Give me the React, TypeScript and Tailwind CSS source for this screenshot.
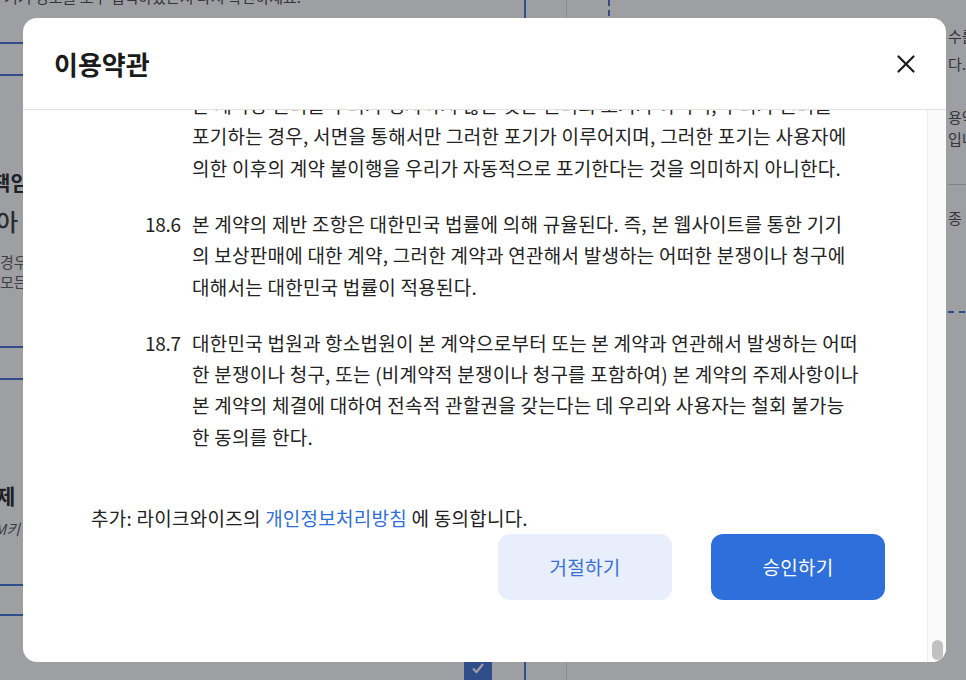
import React from 'react';

const clauses = [
  {
    no: '18.5',
    lines: [
      '우리가 본 계약의 어느 조항에 따른 권리나 구제수단을 행사하지 않거나 그 행사를',
      '지연하더라도, 이는 그러한 권리나 구제수단의 포기로 간주되지 아니한다. 우리가',
      '본 계약상 권리를 우리가 행사하지 않는 것은 권리의 포기가 아니며, 우리가 권리를',
      '포기하는 경우, 서면을 통해서만 그러한 포기가 이루어지며, 그러한 포기는 사용자에',
      '의한 이후의 계약 불이행을 우리가 자동적으로 포기한다는 것을 의미하지 아니한다.',
    ],
  },
  {
    no: '18.6',
    lines: [
      '본 계약의 제반 조항은 대한민국 법률에 의해 규율된다. 즉, 본 웹사이트를 통한 기기',
      '의 보상판매에 대한 계약, 그러한 계약과 연관해서 발생하는 어떠한 분쟁이나 청구에',
      '대해서는 대한민국 법률이 적용된다.',
    ],
  },
  {
    no: '18.7',
    lines: [
      '대한민국 법원과 항소법원이 본 계약으로부터 또는 본 계약과 연관해서 발생하는 어떠',
      '한 분쟁이나 청구, 또는 (비계약적 분쟁이나 청구를 포함하여) 본 계약의 주제사항이나',
      '본 계약의 체결에 대하여 전속적 관할권을 갖는다는 데 우리와 사용자는 철회 불가능',
      '한 동의를 한다.',
    ],
  },
];

const CloseIcon = () => (
  <svg width="18" height="18" viewBox="0 0 18 18" fill="none">
    <path d="M1.5 1.5L16.5 16.5M16.5 1.5L1.5 16.5" stroke="#1b1b1b" strokeWidth="2.2" strokeLinecap="round" />
  </svg>
);

const Background = () => (
  <div className="flex h-full">
    <div className="flex w-[567px] shrink-0 border-r border-[#e2e3e6]">
      <div className="flex w-[526px] shrink-0 flex-col border-r-2 border-[#4d7bd8]">
        <p className="-mt-[13px] whitespace-nowrap pl-[4px] text-[15px] leading-[20px] text-[#555]">
          기기 정보를 모두 입력하셨는지 다시 확인하세요.
        </p>
        <div className="mt-[35px] h-[38px] border-y-2 border-[#4d7bd8]" />
        <p className="-ml-[8px] mt-[94px] whitespace-nowrap text-[20px] font-bold leading-[26px] text-[#333]">
          책임
        </p>
        <p className="-ml-[4px] mt-[8px] whitespace-nowrap text-[24px] font-medium leading-[34px] text-[#444]">
          아
        </p>
        <p className="mt-[14px] whitespace-nowrap text-[15px] leading-[20px] text-[#666]">경우</p>
        <p className="whitespace-nowrap text-[15px] leading-[20px] text-[#666]">모든</p>
        <div className="mt-[54px] h-[38px] border-y-2 border-[#4d7bd8]" />
        <p className="-ml-[4px] mt-[101px] whitespace-nowrap text-[21px] font-bold leading-[28px] text-[#333]">
          제
        </p>
        <p className="-ml-[6px] mt-[10px] whitespace-nowrap text-[15px] italic leading-[20px] text-[#666]">M키</p>
        <div className="mt-[45px] h-[37px] border-y-2 border-[#4d7bd8]" />
        <div className="ml-[464px] mt-[39px] flex h-[28px] w-[28px] items-center justify-center bg-[#4d7bd8]">
          <svg width="14" height="14" viewBox="0 0 14 14" fill="none">
            <path d="M2 7.5L5.5 11L12 3" stroke="white" strokeWidth="2.2" />
          </svg>
        </div>
      </div>
    </div>
    <div className="flex flex-1">
      <div className="w-[379px] shrink-0 pl-[41px]">
        <div className="h-[16px] w-0 border-l-2 border-dashed border-[#4d7bd8]" />
      </div>
      <div className="flex flex-1 flex-col whitespace-nowrap pl-[2px] text-[15px] text-[#555]">
        <p className="mt-[22px] leading-[28px]">수를</p>
        <p className="leading-[28px]">다.</p>
        <p className="mt-[28px] leading-[22px]">용약</p>
        <p className="leading-[22px]">입니</p>
        <div className="mt-[34px] border-t border-[#d4d5d9]" />
        <p className="mt-[22px] leading-[22px]">종</p>
        <div className="mt-[82px] border-t-2 border-dashed border-[#4d7bd8]" />
      </div>
    </div>
  </div>
);

const TermsModal = () => (
  <div className="flex h-[644px] w-[923px] flex-col overflow-hidden rounded-[14px] bg-white">
    <div className="flex h-[92px] shrink-0 items-center justify-between border-b border-[#e2e2e5] px-[31px]">
      <h2 className="text-[26px] font-bold text-[#1b1b1b]">이용약관</h2>
      <button className="flex h-[18px] w-[18px] items-center justify-center">
        <CloseIcon />
      </button>
    </div>
    <div className="flex min-h-0 flex-1">
      <div className="flex min-w-0 flex-1 flex-col justify-end overflow-hidden pb-[62px] pl-[68px] pr-[42px]">
        <div className="ml-[54px] flex flex-col gap-[25px]">
          {clauses.map((c) => (
            <div key={c.no} className="flex text-[19px] leading-[31.3px] text-[#222]">
              <span className="w-[47px] shrink-0 tracking-[-0.3px]">{c.no}</span>
              <div className="flex flex-col tracking-[0.25px]">
                {c.lines.map((l, i) => (
                  <span key={i} className="whitespace-nowrap">
                    {l}
                  </span>
                ))}
              </div>
            </div>
          ))}
        </div>
        <p className="mt-[52px] whitespace-nowrap text-[19px] leading-[27px] tracking-[0.25px] text-[#222]">
          추가: 라이크와이즈의 <a className="text-[#2f6fdb]">개인정보처리방침</a> 에 동의합니다.
        </p>
        <div className="mt-[3px] flex justify-end gap-[39px]">
          <button className="h-[66px] w-[174px] rounded-[12px] bg-[#e8eefb] text-[19px] tracking-[0.3px] text-[#3a70d8]">
            거절하기
          </button>
          <button className="h-[66px] w-[174px] rounded-[12px] bg-[#2f6fdb] text-[19px] tracking-[0.3px] text-white">
            승인하기
          </button>
        </div>
      </div>
      <div className="flex w-[19px] shrink-0 flex-col justify-end border-l border-[#ececec] bg-[#fafafa] pb-[2px]">
        <div className="ml-[4px] h-[20px] w-[11px] rounded-full bg-[#c1c1c1]" />
      </div>
    </div>
  </div>
);

export default function App() {
  return (
    <div className="relative h-[680px] w-[966px] overflow-hidden bg-white font-['Noto_Sans_CJK_KR','Noto_Sans',sans-serif]">
      <Background />
      <div className="absolute inset-0 bg-[rgba(0,2,10,0.38)] pl-[23px] pt-[18px]">
        <TermsModal />
      </div>
    </div>
  );
}
